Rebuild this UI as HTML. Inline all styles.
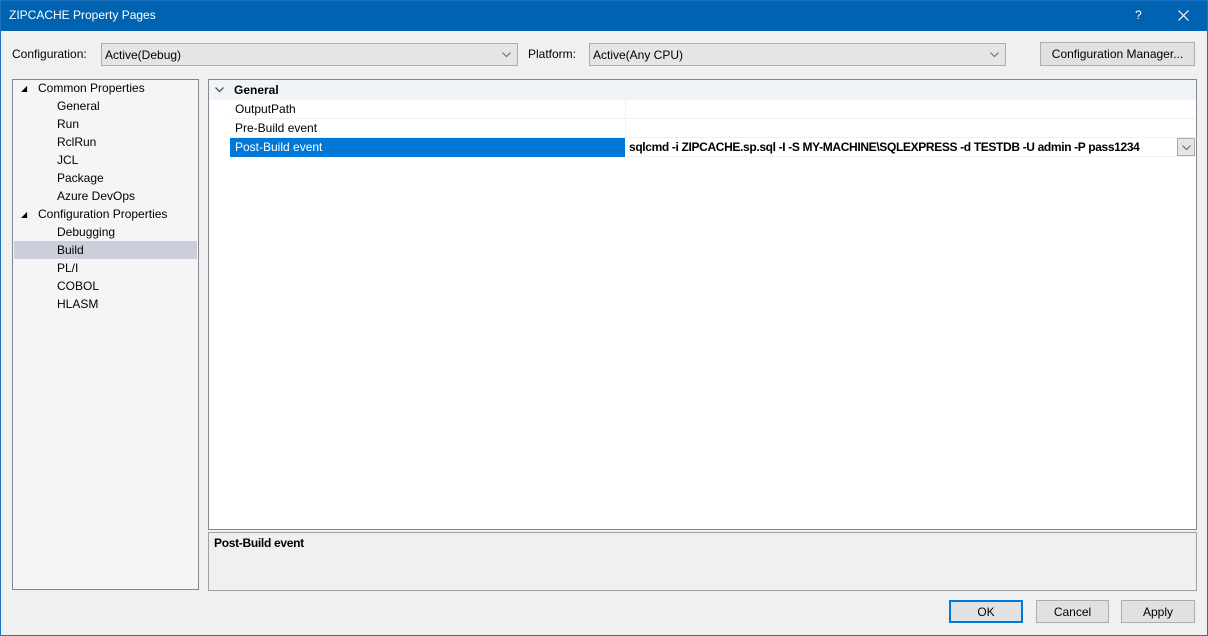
<!DOCTYPE html>
<html><head><style>
*{box-sizing:border-box;margin:0;padding:0}
body{width:1208px;height:636px;overflow:hidden;background:#f0f0f0;font-family:"Liberation Sans",sans-serif;font-size:12px;color:#000;position:relative}
.frame{position:absolute;left:0;top:0;width:1208px;height:636px;border:1px solid #1a6fbf}
.title{position:absolute;left:0;top:0;width:1208px;height:31px;background:#0063b1;color:#fff}
.title span{position:absolute;top:8px}
.abs{position:absolute}
.combo{position:absolute;height:23px;background:#e5e5e5;border:1px solid #adadad;padding:4px 0 0 3px}
.combo svg{position:absolute;right:6px;top:8px}
.btn{position:absolute;height:23px;background:#e1e1e1;border:1px solid #adadad;text-align:center;padding-top:4px}
.tree{position:absolute;left:12px;top:79px;width:187px;height:511px;background:#f5f5f5;border:1px solid #828790}
.tree div{position:absolute;height:18px;line-height:18px}
.grid{position:absolute;left:208px;top:79px;width:989px;height:451px;background:#fff;border:1px solid #828790}
.row{position:absolute;left:21px;width:966px;height:19px;line-height:18px;border-bottom:1px solid #f0f0f0}
.row .n{position:absolute;left:5px}
.row .sep{position:absolute;left:395px;top:0;width:1px;height:19px;background:#f0f0f0}
</style></head><body>
<div class="title"><span style="left:9px">ZIPCACHE Property Pages</span><span style="left:1135px">?</span>
<svg class="abs" style="left:1178px;top:10px" width="11" height="11"><path d="M0.5 0.5L10.5 10.5M10.5 0.5L0.5 10.5" stroke="#fff" stroke-width="1.2"/></svg></div>
<div class="frame"></div>
<div class="abs" style="left:12px;top:47px">Configuration:</div>
<div class="combo" style="left:101px;top:43px;width:417px">Active(Debug)<svg width="9" height="6"><path d="M0.5 0.5L4.5 4.5L8.5 0.5" stroke="#666" fill="none"/></svg></div>
<div class="abs" style="left:528px;top:47px">Platform:</div>
<div class="combo" style="left:589px;top:43px;width:417px">Active(Any CPU)<svg width="9" height="6"><path d="M0.5 0.5L4.5 4.5L8.5 0.5" stroke="#666" fill="none"/></svg></div>
<div class="btn" style="left:1040px;top:42px;width:155px;height:24px">Configuration Manager...</div>
<div class="tree">
<div style="left:8px;top:0;font-size:8px">◢</div>
<div style="left:25px;top:-1px">Common Properties</div>
<div style="left:44px;top:17px">General</div>
<div style="left:44px;top:35px">Run</div>
<div style="left:44px;top:53px">RclRun</div>
<div style="left:44px;top:71px">JCL</div>
<div style="left:44px;top:89px">Package</div>
<div style="left:44px;top:107px">Azure DevOps</div>
<div style="left:8px;top:126px;font-size:8px">◢</div>
<div style="left:25px;top:125px">Configuration Properties</div>
<div style="left:44px;top:143px">Debugging</div>
<div style="left:1px;top:161px;width:183px;background:#cccedb"></div>
<div style="left:44px;top:161px">Build</div>
<div style="left:44px;top:179px">PL/I</div>
<div style="left:44px;top:197px">COBOL</div>
<div style="left:44px;top:215px">HLASM</div>
</div>
<div class="grid">
<div class="abs" style="left:0;top:0;width:987px;height:20px;background:#f0f4f9"></div>
<svg class="abs" style="left:6px;top:7px" width="9" height="6"><path d="M0.5 0.5L4.5 4.5L8.5 0.5" stroke="#555" fill="none" stroke-width="1.3"/></svg>
<div class="abs" style="left:25px;top:3px;font-weight:bold">General</div>
<div class="row" style="top:20px"><span class="n">OutputPath</span><span class="sep"></span></div>
<div class="row" style="top:39px"><span class="n">Pre-Build event</span><span class="sep"></span></div>
<div class="row" style="top:58px"><div class="abs" style="left:0;top:0;width:395px;height:19px;background:#0078d7"></div><span class="n" style="color:#fff">Post-Build event</span><span class="abs" style="left:399px;font-weight:bold;letter-spacing:-0.35px">sqlcmd -i ZIPCACHE.sp.sql -I -S MY-MACHINE\SQLEXPRESS -d TESTDB -U admin -P pass1234</span>
<div class="abs" style="left:947px;top:0;width:18px;height:18px;background:#e5e5e5;border:1px solid #adadad"><svg class="abs" style="left:4px;top:6px" width="9" height="6"><path d="M0.5 0.5L4.5 4.5L8.5 0.5" stroke="#666" fill="none"/></svg></div></div>
</div>
<div class="abs" style="left:208px;top:532px;width:989px;height:59px;border:1px solid #a0a0a0;background:#f0f0f0"></div>
<div class="abs" style="left:214px;top:536px;font-weight:bold;letter-spacing:-0.3px">Post-Build event</div>
<div class="btn" style="left:949px;top:600px;width:74px;border:2px solid #0078d7;padding-top:3px">OK</div>
<div class="btn" style="left:1036px;top:600px;width:73px">Cancel</div>
<div class="btn" style="left:1121px;top:600px;width:74px">Apply</div>
</body></html>
